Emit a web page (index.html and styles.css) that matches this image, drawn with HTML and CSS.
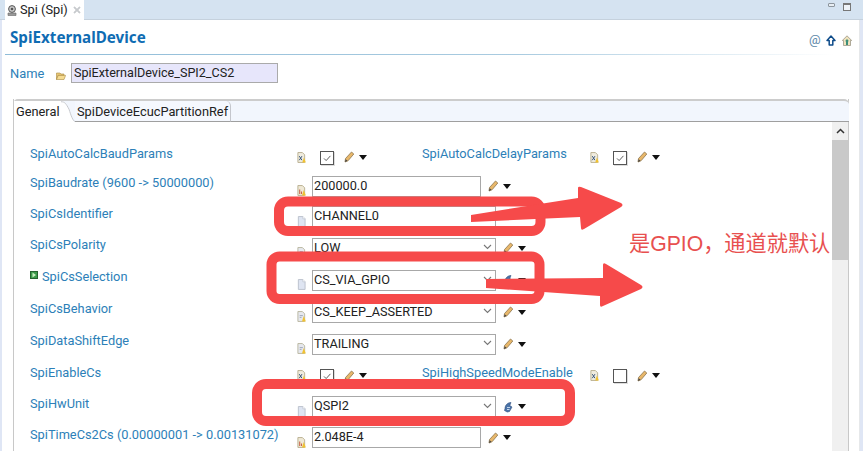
FILE: index.html
```html
<!DOCTYPE html>
<html lang="zh">
<head>
<meta charset="utf-8">
<title>Spi (Spi)</title>
<link rel="stylesheet" href="styles.css">
</head>
<body>
<svg class="defs" aria-hidden="true">
  <symbol id="doc" viewBox="0 0 10 12"><path d="M1.5 .5H6.5L9 3V11.5H1.500Z" fill="#dfe5f2" stroke="#b9bfcb"/><path d="M6.5 .5V3H9" fill="#fff" stroke="#b9bfcb" stroke-width=".7"/></symbol>
  <symbol id="docy" viewBox="0 0 10 12"><path d="M1 .5H6L8.5 3V11.5H1Z" fill="#e6e8ee" stroke="#b7b39c"/><path d="M3 5H6.5M3 7H5" stroke="#9aa3b5"/><path d="M7.5 5.5 9.8 11.5H5.5Z" fill="#f1c232"/></symbol>
  <symbol id="docn" viewBox="0 0 10 12"><path d="M1 .5H6L8.5 3V11.5H1Z" fill="#efe9d6" stroke="#b7ad8c"/><path d="M3 5V10M5 7V10" stroke="#c9654b" stroke-width="1.2"/><path d="M7.5 5.5 9.8 11.5H5.5Z" fill="#f1c232"/></symbol>
  <symbol id="docx" viewBox="0 0 10 12"><path d="M1 .5H6L8.5 3V11.5H1Z" fill="#f0ecdf" stroke="#b7ad8c"/><path d="M2.5 4.5 5.5 9M5.5 4.5 2.5 9" stroke="#38557a" stroke-width="1.1"/><path d="M7.7 6 9.8 11.5H5.8Z" fill="#f1c232"/></symbol>
  <symbol id="pencil" viewBox="0 0 10 12"><path d="M1 11 1.500 7.500 7.500 1 9.800 3 4 9.800Z" fill="#e8b76a" stroke="#8c7650" stroke-width=".8"/><path d="M1 11 1.700 8.300 3.400 9.800Z" fill="#444"/></symbol>
  <symbol id="tri" viewBox="0 0 8 5"><path d="M0 0H8L4 5Z" fill="#111"/></symbol>
  <symbol id="chev" viewBox="0 0 9 6"><path d="M1 1 4.5 4.5 8 1" fill="none" stroke="#777" stroke-width="1.1"/></symbol>
  <symbol id="link" viewBox="0 0 10 12"><path d="M2 7.5C2 4 5 1.5 8 1.5L6.8 4.5 9 6 6.5 10.5 4.2 11 1.5 9.5Z" fill="#4c74a8" stroke="#2f4f7e" stroke-width=".6"/><path d="M4 6.5H7M4 8.5H6.5" stroke="#cfe0f2" stroke-width=".9"/></symbol>
</svg>

<div class="app">
  <div class="tabbar">
    <div class="editor-tab">
      <svg class="tab-icon" viewBox="0 0 10 11"><circle cx="5" cy="4" r="3.4" fill="#c9c9c9" stroke="#555"/><path d="M1 8H9V10.5H1Z" fill="#9a9a9a" stroke="#666" stroke-width=".6"/><circle cx="5" cy="4" r="1.3" fill="#555"/></svg>
      <span class="tab-title">Spi (Spi)</span>
      <svg class="tab-close" viewBox="0 0 8 8"><path d="M1 1 7 7M7 1 1 7" stroke="#a3a8ad" stroke-width="1.4" fill="none"/><path d="M1 1 7 7M7 1 1 7" stroke="#fff" stroke-width=".4" fill="none"/></svg>
    </div>
    <div class="win-btns">
      <span class="win-min"></span>
      <span class="win-max"></span>
    </div>
  </div>

  <div class="editor">
    <div class="header">
      <h1>SpiExternalDevice</h1>
      <div class="head-tools">
        <span class="at">@</span>
        <svg class="head-icon" viewBox="0 0 10 11"><path d="M5 1 9 5.5H6.8V10H3.2V5.5H1Z" fill="#fff" stroke="#0f4c8a" stroke-width="1.5" stroke-linejoin="round"/></svg>
        <svg class="head-icon" viewBox="0 0 10 11"><path d="M5 .8 9.7 5.5H8.5V10.5H1.5V5.5H.3Z" fill="#efe2bd" stroke="#8f8a7a" stroke-width=".7"/><path d="M5 4 7 6.2H6V10H4V6.2H3Z" fill="#3b8f7a"/></svg>
      </div>
    </div>

    <div class="name-row">
      <span class="name-label">Name</span>
      <svg class="folder" viewBox="0 0 10 8"><path d="M.5 1H4L5 2H8V3.4H2.2L.5 7.5Z" fill="#e9c877" stroke="#a9893f" stroke-width=".6"/><path d="M2.2 3.4H9.6L8 7.5H.5Z" fill="#f6dc92" stroke="#a9893f" stroke-width=".6"/></svg>
      <div class="name-input">SpiExternalDevice_SPI2_CS2</div>
    </div>

    <div class="folder-panel">
      <div class="tabs">
        <div class="tab-active">General</div>
        <svg class="tab-curve" viewBox="0 0 14 23" preserveAspectRatio="none"><path d="M0 0C4 0 5 3 8 9 10 16 12 22 14 22.500V23H0Z" fill="#fff"/><path d="M0 .8C4 .8 5 3 8 9 10 16 12 22 14 22.500" fill="none" stroke="#c4c6cc"/></svg>
        <div class="tab-other">SpiDeviceEcucPartitionRef</div>
        <div class="tab-rest"></div>
      </div>
      <div class="panel-body">
        <div class="form">
          <div class="row">
            <span class="label">SpiAutoCalcBaudParams</span>
            <svg class="ic up"><use href="#docx"/></svg>
            <span class="check on"><svg viewBox="0 0 14 14"><path d="M3.500 7.500 6 10 11 4.500" fill="none" stroke="#444" stroke-width="1"/></svg></span>
            <span class="tools"><svg class="pen"><use href="#pencil"/></svg><svg class="tri"><use href="#tri"/></svg></span>
            <span class="label second">SpiAutoCalcDelayParams</span>
            <svg class="ic up"><use href="#docx"/></svg>
            <span class="check on"><svg viewBox="0 0 14 14"><path d="M3.500 7.500 6 10 11 4.500" fill="none" stroke="#444" stroke-width="1"/></svg></span>
            <span class="tools"><svg class="pen"><use href="#pencil"/></svg><svg class="tri"><use href="#tri"/></svg></span>
          </div>
          <div class="row">
            <span class="label">SpiBaudrate (9600 -&gt; 50000000)</span>
            <svg class="ic"><use href="#docn"/></svg>
            <div class="field text">200000.0</div>
            <span class="tools near"><svg class="pen"><use href="#pencil"/></svg><svg class="tri"><use href="#tri"/></svg></span>
          </div>
          <div class="row">
            <span class="label">SpiCsIdentifier</span>
            <svg class="ic"><use href="#doc"/></svg>
            <div class="field combo">CHANNEL0</div>
          </div>
          <div class="row">
            <span class="label">SpiCsPolarity</span>
            <svg class="ic"><use href="#docy"/></svg>
            <div class="field combo">LOW<svg class="chev"><use href="#chev"/></svg></div>
            <span class="tools near"><svg class="pen"><use href="#pencil"/></svg><svg class="tri"><use href="#tri"/></svg></span>
          </div>
          <div class="row">
            <span class="label with-flag"><svg class="flag" viewBox="0 0 8 8"><rect x=".5" y=".5" width="7" height="7" fill="#3c9a4a" stroke="#27632f"/><path d="M2.500 1.500 6 4 2.500 6.500Z" fill="#c9efc0"/></svg>SpiCsSelection</span>
            <svg class="ic"><use href="#doc"/></svg>
            <div class="field combo">CS_VIA_GPIO<svg class="chev"><use href="#chev"/></svg></div>
            <span class="tools near"><svg class="pen"><use href="#link"/></svg><svg class="tri"><use href="#tri"/></svg></span>
          </div>
          <div class="row">
            <span class="label">SpiCsBehavior</span>
            <svg class="ic"><use href="#docy"/></svg>
            <div class="field combo">CS_KEEP_ASSERTED<svg class="chev"><use href="#chev"/></svg></div>
            <span class="tools near"><svg class="pen"><use href="#pencil"/></svg><svg class="tri"><use href="#tri"/></svg></span>
          </div>
          <div class="row">
            <span class="label">SpiDataShiftEdge</span>
            <svg class="ic"><use href="#docy"/></svg>
            <div class="field combo">TRAILING<svg class="chev"><use href="#chev"/></svg></div>
            <span class="tools near"><svg class="pen"><use href="#pencil"/></svg><svg class="tri"><use href="#tri"/></svg></span>
          </div>
          <div class="row">
            <span class="label">SpiEnableCs</span>
            <svg class="ic up"><use href="#docx"/></svg>
            <span class="check on"><svg viewBox="0 0 14 14"><path d="M3.500 7.500 6 10 11 4.500" fill="none" stroke="#444" stroke-width="1"/></svg></span>
            <span class="tools"><svg class="pen"><use href="#pencil"/></svg><svg class="tri"><use href="#tri"/></svg></span>
            <span class="label second">SpiHighSpeedModeEnable</span>
            <svg class="ic up"><use href="#docx"/></svg>
            <span class="check"></span>
            <span class="tools"><svg class="pen"><use href="#pencil"/></svg><svg class="tri"><use href="#tri"/></svg></span>
          </div>
          <div class="row">
            <span class="label">SpiHwUnit</span>
            <svg class="ic"><use href="#doc"/></svg>
            <div class="field combo">QSPI2<svg class="chev"><use href="#chev"/></svg></div>
            <span class="tools near"><svg class="pen"><use href="#link"/></svg><svg class="tri"><use href="#tri"/></svg></span>
          </div>
          <div class="row">
            <span class="label">SpiTimeCs2Cs (0.00000001 -&gt; 0.00131072)</span>
            <svg class="ic"><use href="#docn"/></svg>
            <div class="field text">2.048E-4</div>
            <span class="tools near"><svg class="pen"><use href="#pencil"/></svg><svg class="tri"><use href="#tri"/></svg></span>
          </div>
        </div>
        <div class="scrollbar">
          <div class="sb-arrow"><svg viewBox="0 0 9 6"><path d="M1 5 4.500 1.500 8 5" fill="none" stroke="#333" stroke-width="1.500"/></svg></div>
          <div class="sb-thumb"></div>
        </div>
      </div>
    </div>
  </div>

  <svg class="markup" viewBox="0 0 863 451" aria-hidden="true">
    <rect x="279" y="201.500" width="261.500" height="29.500" rx="9" />
    <rect x="271.500" y="256.500" width="268" height="42.500" rx="8" />
    <rect x="257" y="384" width="313" height="37" rx="9" />
    <path class="arrow" d="M471 215 578 198 578 188Q578 186 581 187L621 203Q624 205 621 207L584 229Q581 231 581 228L580 217 471 222Z"/>
    <path class="arrow" d="M486 279 603 278 603 265Q603 262 606 264L641 285Q644 287 641 289L603 306Q600 308 600 305L600 296 486 288Z"/>
  </svg>
  <div class="note">是GPIO，通道就默认</div>
</div>
</body>
</html>
```
FILE: styles.css
```css
* { box-sizing: border-box; }
html, body { margin: 0; padding: 0; }
body { width: 863px; height: 451px; overflow: hidden; background: #fff; font-family: Roboto, "Noto Sans", "Noto Sans CJK SC", sans-serif; font-size: 12.800px; color: #222; }
.defs { position: absolute; width: 0; height: 0; }
.app { position: relative; width: 863px; height: 451px; overflow: hidden; display: flex; flex-direction: column; background: #dfe6f5; }

.tabbar { flex: none; height: 20px; display: flex; justify-content: space-between; padding-left: 5px; background: #d5e3f1; border-bottom: 1px solid #c5d1dd; }
.editor-tab { width: 79px; height: 20px; display: flex; align-items: center; background: #fff; line-height: 18px; color: #222; padding-left: 2px; }
.tab-icon { flex: none; width: 10px; height: 11px; margin-right: 3px; }
.tab-title { flex: none; width: 47px; white-space: nowrap; font-size: 12.800px; }
.tab-close { flex: none; width: 8px; height: 8px; margin-left: 6px; }
.win-btns { display: flex; gap: 8px; padding: 2px 12px 0 0; }
.win-min { width: 7px; height: 4px; background: #e8eef4; border: 1px solid #8d959d; border-radius: 1px; margin-top: 1px; }
.win-max { width: 8px; height: 8px; background: #eef3f8; border: 1px solid #777; border-top-width: 2px; margin-top: 1px; }

.editor { flex: 1; min-height: 0; margin: 0 3px 0 2px; background: #fff; display: flex; flex-direction: column; border-right: 1px solid #e6e8ea; }

.header { flex: none; height: 35px; margin-left: 3px; display: flex; align-items: center; justify-content: space-between; padding: 0 7px 0 5px; border-bottom: 1px solid; border-image: linear-gradient(90deg, #8fbcd8, #a9cbe0 60%, #fff 97%) 1; }
.header h1 { margin: 0; font-family: "Noto Sans", sans-serif; font-size: 15.200px; font-weight: 700; line-height: 20px; color: #0f6cb3; }
.head-tools { display: flex; align-items: center; gap: 6px; padding-top: 6px; }
.at { width: 11px; font-size: 13px; line-height: 12px; color: #5d88a8; text-align: center; }
.head-icon { width: 10px; height: 11px; }

.name-row { flex: none; height: 20px; margin-top: 8px; padding-left: 8px; display: flex; align-items: center; }
.name-label { width: 46px; color: #2d7fb8; font-size: 12.900px; }
.folder { width: 10px; height: 8px; margin-top: 6px; margin-right: 5px; }
.name-input { width: 207px; height: 20px; background: #e7e6fb; border: 1px solid #aaa; line-height: 18px; padding-left: 2px; font-size: 12.600px; }

.folder-panel { flex: 1; min-height: 0; margin: 16px 10px 0 11px; display: flex; flex-direction: column; border-left: 1px solid #c8c8c8; border-right: 1px solid #c8c8c8; }
.tabs { flex: none; height: 23px; display: flex; border-top: 2px solid #cccccc; border-radius: 5px 5px 0 0; margin: 0 -1px 0 -1px; background: #f2f6fd; }
.tab-active { width: 48px; height: 21px; background: #fff; border-left: 1px solid #c8c8c8; line-height: 21px; padding-left: 2px; white-space: nowrap; }
.tab-curve { width: 14px; height: 21px; flex: none; }
.tab-other { height: 21px; width: 156px; padding-left: 2px; line-height: 21px; border-right: 1px solid #c4c6cc; border-bottom: 1px solid #9f9f9f; border-top-right-radius: 5px; background: #f5f8fe; white-space: nowrap; }
.tab-rest { flex: 1; border-bottom: 1px solid #9f9f9f; }

.panel-body { flex: 1; min-height: 0; display: flex; }
.form { flex: 1; min-width: 0; padding: 21px 0 0 16px; display: grid; grid-template-rows: 28px 30px 31px 32px 32px 32px 32px 31px 31px 31px; }
.row { display: flex; align-items: center; min-width: 0; }
.label { flex: none; width: 267px; color: #2d7fb8; line-height: 18px; white-space: nowrap; margin-top: -6px; }
.with-flag { display: flex; align-items: center; }
.flag { width: 8px; height: 8px; margin: -5px 4px 0 0; }
.second { width: 168px; margin-left: 55px; }
.ic { flex: none; width: 9px; height: 11px; margin-top: 9px; }
.ic.up { margin-top: 0; }
.check { flex: none; width: 14px; height: 14px; margin-left: 14px; border: 1px solid #555; box-shadow: 1px 1px 0 #ddd; background: #fff; margin-top: 1px; }
.check svg { display: block; width: 12px; height: 12px; }
.tools { flex: none; display: flex; align-items: center; gap: 5px; margin-left: 10px; }
.tools.near { margin-left: 7px; }
.pen { width: 10px; height: 12px; }
.tri { width: 8px; height: 5px; }
.field { flex: none; height: 21px; margin-left: 6px; border: 1px solid #a8a8a8; background: #fff; line-height: 17px; padding: 0 0 2px 1px; display: flex; justify-content: space-between; align-items: center; white-space: nowrap; font-size: 12.700px; }
.text { width: 169px; }
.combo { width: 184px; padding-right: 3px; }
.chev { width: 9px; height: 6px; }

.scrollbar { flex: none; width: 16px; background: #f0f0f0; display: flex; flex-direction: column; }
.sb-arrow { height: 18px; display: flex; align-items: center; justify-content: center; }
.sb-arrow svg { width: 9px; height: 6px; }
.sb-thumb { height: 120px; background: #c9c9c9; }

.markup { position: absolute; left: 0; top: 0; width: 863px; height: 451px; fill: none; stroke: #f64a4a; stroke-width: 10; }
.arrow { fill: #f64a4a; stroke: none; }
.note { position: absolute; left: 629px; top: 230px; font-size: 21.200px; line-height: 28px; color: #e8504f; white-space: nowrap; font-family: "Liberation Sans", "Noto Sans CJK SC", sans-serif; }
```
